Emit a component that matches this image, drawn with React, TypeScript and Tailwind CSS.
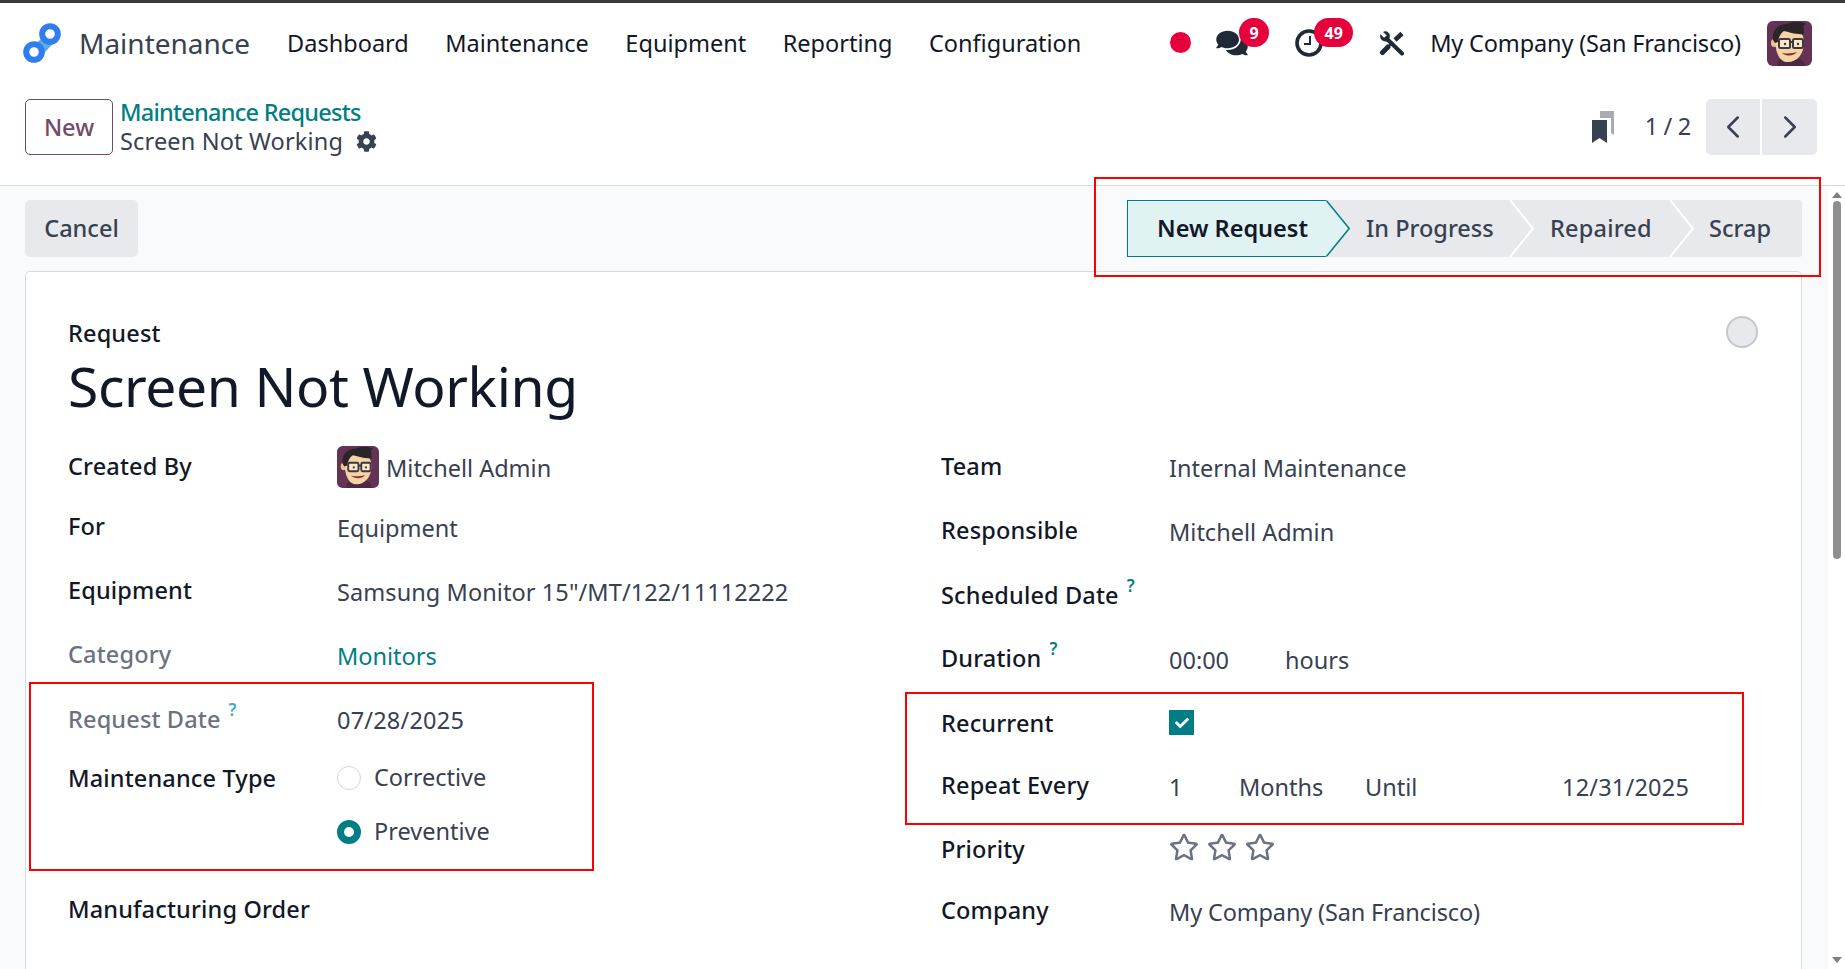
import type { ReactNode } from 'react'
import { FaComments, FaCog, FaRegStar, FaCheck } from 'react-icons/fa'
import { ChevronLeft, ChevronRight } from 'lucide-react'

function Logo() {
  return (
    <svg viewBox="0 0 40 40" className="w-[40px] h-[40px]">
      <path d="M17 17 L25 6 L34 16 L16 36 L6 25 Z" fill="#55b2dc" />
      <circle cx="27" cy="11" r="7.8" fill="#fff" stroke="#2f7df0" strokeWidth="6" />
      <circle cx="11" cy="29" r="7.8" fill="#fff" stroke="#2f7df0" strokeWidth="6" />
    </svg>
  )
}

function Avatar({ className }: { className: string }) {
  return (
    <svg viewBox="0 0 45 45" className={className}>
      <rect width="45" height="45" rx="6" fill="#633255" />
      <path d="M10 45 C10 38 14 36 22 36 C32 36 36 38 38 45 Z" fill="#4f2745" />
      <ellipse cx="7" cy="22" rx="3" ry="4" fill="#eec08e" />
      <path d="M8 16 C8 10 14 8 24 9 C34 9 37 14 37 22 C37 33 30 41 21 41 C13 41 8 33 8 16 Z" fill="#f5d3a6" />
      <path d="M6 19 C5 10 10 3 20 3 C26 0 34 0 39 3 C35 4 37 7 37 13 C30 14 22 11 17 10 C14 12 12 15 11 21 L8 22 Z" fill="#2a2528" />
      <rect x="12" y="18" width="11" height="9" rx="1.5" fill="#fbe6c8" stroke="#3a3a3e" strokeWidth="2" />
      <rect x="26" y="18" width="10" height="9" rx="1.5" fill="#fbe6c8" stroke="#3a3a3e" strokeWidth="2" />
      <path d="M23 21 L26 21" stroke="#3a3a3e" strokeWidth="2" />
      <circle cx="18" cy="23" r="1.2" fill="#3a3a3e" />
      <circle cx="31" cy="23" r="1.2" fill="#3a3a3e" />
      <path d="M15 32 C20 36 27 35 30 31 C27 32 20 33 15 32 Z" fill="#7a3b2e" />
    </svg>
  )
}

function Clock() {
  return (
    <svg viewBox="0 0 28 28" className="w-[28px] h-[28px]" fill="none" stroke="currentColor">
      <circle cx="14" cy="14" r="12" strokeWidth="3.6" />
      <path d="M15 7 V15 H9" strokeWidth="2" />
    </svg>
  )
}

function Tools() {
  return (
    <svg viewBox="0 0 26 25" className="ml-[56px] w-[26px] h-[25px] text-[#1f2937]" fill="currentColor" stroke="currentColor">
      {/* wrench */}
      <path d="M8 8 L23 22.5" strokeWidth="4" strokeLinecap="round" fill="none" />
      <path d="M1.5 3.5 L5 7 L8 4.5 L4.5 1 C8 -0.5 11.5 2.5 10.5 6.5 L8 10 C4 11 0.5 8 1.5 3.5 Z" strokeWidth="0.5" />
      {/* screwdriver */}
      <path d="M3.5 21.5 L9 16" strokeWidth="5" strokeLinecap="round" fill="none" />
      <path d="M9 16 L13 12" strokeWidth="1.8" fill="none" />
      <path d="M16 9 L23 2.5" strokeWidth="4.5" strokeLinecap="butt" fill="none" />
    </svg>
  )
}

function Bookmarks() {
  return (
    <svg viewBox="0 0 22 32" className="w-[22px] h-[32px]">
      <path d="M8 0 H22 V24 L19 22 V7 H8 Z" fill="#a9abb3" />
      <path d="M0 9 H15 V32 L7.5 27 L0 32 Z" fill="#374151" />
    </svg>
  )
}

function Help({ className = 'text-[#017e84]' }: { className?: string }) {
  return <sup className={`text-[17px] font-semibold ml-[8px] -top-[12px] ${className}`}>?</sup>
}

function Label({ children, muted = false }: { children: ReactNode; muted?: boolean }) {
  return <span className={`font-medium tracking-[0.15px] ${muted ? 'text-[#6b7280]' : 'text-[#111827]'}`}>{children}</span>
}

function Row({ h, label, labelWidth, children }: { h: string; label: ReactNode; labelWidth: string; children?: ReactNode }) {
  return (
    <div className={`flex items-start ${h}`}>
      <div className={`h-[44px] flex items-center ${labelWidth}`}>{label}</div>
      <div className="h-[44px] flex items-center text-[#374151] pt-[3px]">{children}</div>
    </div>
  )
}

function NavLink({ children }: { children: ReactNode }) {
  return <a className="text-[#111827]">{children}</a>
}

function Badge({ children, className }: { children: ReactNode; className: string }) {
  return (
    <span className={`absolute -top-[11px] h-[29px] rounded-full bg-[#e6003c] text-white text-[16px] font-bold flex items-center justify-center ${className}`}>
      {children}
    </span>
  )
}

function Chevron({ className }: { className: string }) {
  return (
    <svg viewBox="0 0 26 57" preserveAspectRatio="none" className={`absolute top-0 w-[26px] h-[57px] ${className}`}>
      <path d="M1 0 L24 28.5 L1 57" fill="none" stroke="#fff" strokeWidth="2" />
    </svg>
  )
}

export default function App() {
  return (
    <div className="relative w-[1845px] h-[969px] overflow-hidden flex flex-col bg-white font-['Noto_Sans',sans-serif] text-[23.5px] text-[#374151]">
      <div className="h-[3px] bg-[#3b3b3b] shrink-0" />

      <header className="h-[80px] shrink-0 flex items-center pl-[23px] pr-[33px]">
        <Logo />
        <span className="ml-[16px] text-[28px] text-[#374151]">Maintenance</span>
        <nav className="ml-[37px] flex gap-[36.5px] pt-[2px]">
          <NavLink>Dashboard</NavLink>
          <NavLink>Maintenance</NavLink>
          <NavLink>Equipment</NavLink>
          <NavLink>Reporting</NavLink>
          <NavLink>Configuration</NavLink>
        </nav>
        <div className="ml-auto flex items-center">
          <span className="w-[21px] h-[21px] rounded-full bg-[#e6003c] -mt-[2px]" />
          <span className="relative ml-[25px] flex text-[#1f2937]">
            <FaComments className="w-[32px] h-[28px]" />
            <Badge className="left-[23px] w-[30px]">9</Badge>
          </span>
          <span className="relative ml-[47px] flex text-[#1f2937]">
            <Clock />
            <Badge className="left-[19px] w-[39px]">49</Badge>
          </span>
          <Tools />
          <span className="ml-[25px] pt-[2px] text-[#111827] tracking-[-0.15px]">My Company (San Francisco)</span>
          <Avatar className="ml-[26px] w-[45px] h-[45px]" />
        </div>
      </header>

      <div className="h-[103px] shrink-0 border-b border-[#d8dadd] flex items-start pt-[16px] pl-[25px] pr-[28px]">
        <button className="w-[88px] h-[56px] pt-[2px] border border-[#714b67] rounded-[5px] text-[#714b67] font-medium">New</button>
        <div className="ml-[7px] -mt-[1px] flex flex-col">
          <a className="text-[#017e84] font-medium leading-[29px] tracking-[-0.75px]">Maintenance Requests</a>
          <div className="flex items-center leading-[29px] text-[#374151] tracking-[0.16px]">
            Screen Not Working
            <FaCog className="ml-[13px] w-[21px] h-[21px]" />
          </div>
        </div>
        <div className="ml-auto flex items-center">
          <Bookmarks />
          <span className="ml-[31px] mr-[1px] text-[#374151] tracking-[-0.3px]">1 / 2</span>
          <div className="ml-[14px] flex gap-[2px] h-[56px]">
            <button className="w-[54px] bg-[#e7e9ed] rounded-l-[5px] flex items-center justify-center"><ChevronLeft className="w-[38px] h-[38px] text-[#374151]" strokeWidth={1.6} /></button>
            <button className="w-[55px] bg-[#e7e9ed] rounded-r-[5px] flex items-center justify-center"><ChevronRight className="w-[38px] h-[38px] text-[#374151]" strokeWidth={1.6} /></button>
          </div>
        </div>
      </div>

      <main className="flex-1 flex min-h-0 bg-[#f9fafb]">
        <div className="flex-1 flex flex-col min-w-0 pl-[25px] pr-[26px]">
          <div className="h-[85px] shrink-0 flex items-start justify-between pt-[14px]">
            <button className="w-[113px] h-[57px] rounded-[5px] bg-[#e7e9ed] text-[#374151] font-medium">Cancel</button>
            <div className="relative flex h-[57px] w-[675px] bg-[#e7e9ed] rounded-r-[3px] font-medium text-[#374151]">
              <div className="relative w-[199px] h-full pl-[29px] bg-[#e1f2f3] border-y-[1.5px] border-l-[1.5px] border-[#017e84] flex items-center text-[#111827] font-semibold whitespace-nowrap">
                New Request
                <svg viewBox="0 0 24 57" preserveAspectRatio="none" className="absolute -right-[24px] -top-[1.5px] w-[24px] h-[57px]">
                  <path d="M0 0 H1 L23.5 28.5 L1 57 H0 Z" fill="#e1f2f3" />
                  <path d="M0.5 0.7 L23.2 28.5 L0.5 56.3" fill="none" stroke="#017e84" strokeWidth="1.6" />
                </svg>
              </div>
              <div className="pl-[40px] flex items-center h-full flex-1">
                <span className="w-[184px]">In Progress</span>
                <span className="w-[159px] tracking-[0.2px]">Repaired</span>
                <span>Scrap</span>
              </div>
              <Chevron className="left-[382px]" />
              <Chevron className="left-[542px]" />
            </div>
          </div>

          <section className="flex-1 bg-white border border-b-0 border-[#d8dadd] rounded-t-[5px] relative pl-[42px] pr-[36px] pt-[45px]">
            <span className="absolute right-[43px] top-[44px] w-[32px] h-[32px] rounded-full bg-[#e7e9ed] border-2 border-[#c4c7cd]" />
            <div className="font-medium text-[#111827] leading-[32px] tracking-[0.15px]">Request</div>
            <h1 className="mt-[1px] text-[55.2px] leading-[72px] text-[#111827] tracking-[-0.4px]">Screen Not Working</h1>
            <div className="mt-[23px] grid grid-cols-[873px_1fr]">
              <div className="flex flex-col">
                <Row h="h-[60px]" labelWidth="w-[269px]" label={<Label>Created By</Label>}>
                  <Avatar className="w-[42px] h-[42px] mr-[7px] -mt-[3px]" />
                  Mitchell Admin
                </Row>
                <Row h="h-[64px]" labelWidth="w-[269px]" label={<Label>For</Label>}>Equipment</Row>
                <Row h="h-[64px]" labelWidth="w-[269px]" label={<Label>Equipment</Label>}>
                  <span className="tracking-[0.08px]">Samsung Monitor 15"/MT/122/11112222</span>
                </Row>
                <Row h="h-[65px]" labelWidth="w-[269px]" label={<Label muted>Category</Label>}>
                  <span className="text-[#017e84]">Monitors</span>
                </Row>
                <Row h="h-[59px]" labelWidth="w-[269px]" label={<Label muted>Request Date<Help className="text-[#3fa9d6]" /></Label>}>
                  <span className="-mt-[2px] tracking-[0.2px]">07/28/2025</span>
                </Row>
                <Row h="h-[131px]" labelWidth="w-[269px]" label={<Label>Maintenance Type</Label>}>
                  <div className="self-start flex flex-col gap-[19px]">
                    <div className="flex items-center gap-[13px]">
                      <span className="w-[24px] h-[24px] rounded-full border border-[#d1d5db] bg-white" />
                      Corrective
                    </div>
                    <div className="flex items-center gap-[13px]">
                      <span className="w-[24px] h-[24px] rounded-full border-[7px] border-[#017e84] bg-white" />
                      Preventive
                    </div>
                  </div>
                </Row>
                <Row h="h-[44px]" labelWidth="w-[269px]" label={<Label>Manufacturing Order</Label>} />
              </div>
              <div className="flex flex-col">
                <Row h="h-[64px]" labelWidth="w-[228px]" label={<Label>Team</Label>}>Internal Maintenance</Row>
                <Row h="h-[65px]" labelWidth="w-[228px]" label={<Label>Responsible</Label>}>Mitchell Admin</Row>
                <Row h="h-[63px]" labelWidth="w-[228px]" label={<Label>Scheduled Date<Help /></Label>} />
                <Row h="h-[65px]" labelWidth="w-[228px]" label={<Label>Duration<Help /></Label>}>
                  <span className="w-[116px]">00:00</span>hours
                </Row>
                <Row h="h-[62px]" labelWidth="w-[228px]" label={<Label>Recurrent</Label>}>
                  <span className="w-[25px] h-[25px] bg-[#017e84] flex items-center justify-center text-white -mt-[6px]"><FaCheck className="w-[14px] h-[14px]" /></span>
                </Row>
                <Row h="h-[64px]" labelWidth="w-[228px]" label={<Label>Repeat Every</Label>}>
                  <span className="w-[70px]">1</span>
                  <span className="w-[126px]">Months</span>
                  <span className="w-[197px]">Until</span>
                  <span className="tracking-[0.2px]">12/31/2025</span>
                </Row>
                <Row h="h-[61px]" labelWidth="w-[228px]" label={<Label>Priority</Label>}>
                  <div className="flex gap-[8px] text-[#6b7280] -mt-[10px]">
                    <FaRegStar className="w-[30px] h-[30px]" />
                    <FaRegStar className="w-[30px] h-[30px]" />
                    <FaRegStar className="w-[30px] h-[30px]" />
                  </div>
                </Row>
                <Row h="h-[44px]" labelWidth="w-[228px]" label={<Label>Company</Label>}>
                  <span className="tracking-[-0.15px]">My Company (San Francisco)</span>
                </Row>
              </div>
            </div>
          </section>
        </div>

        <div className="w-[17px] shrink-0 bg-white flex flex-col items-center pt-[6px] pb-[6px]">
          <span className="w-0 h-0 border-x-[5px] border-x-transparent border-b-[6px] border-b-[#7f7f7f]" />
          <span className="mt-[3px] w-[8px] h-[358px] rounded-full bg-[#8f8f8f]" />
          <span className="mt-auto w-0 h-0 border-x-[5px] border-x-transparent border-t-[6px] border-t-[#7f7f7f]" />
        </div>
      </main>

      {/* red annotation boxes over the screenshot */}
      <div className="absolute left-[1094px] top-[177px] w-[727px] h-[100px] border-2 border-[#ff0000]" />
      <div className="absolute left-[29px] top-[682px] w-[565px] h-[189px] border-2 border-[#ff0000]" />
      <div className="absolute left-[905px] top-[692px] w-[839px] h-[133px] border-2 border-[#ff0000]" />
    </div>
  )
}
